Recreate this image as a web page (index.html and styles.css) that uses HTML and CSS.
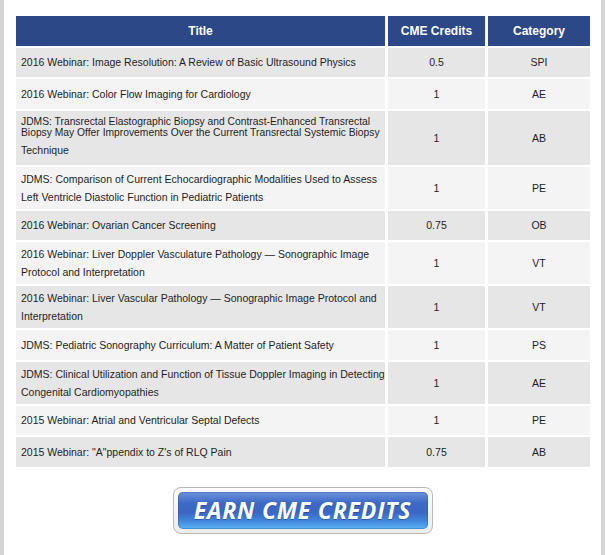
FILE: index.html
```html
<!DOCTYPE html>
<html>
<head>
<meta charset="utf-8">
<link rel="stylesheet" href="styles.css">
</head>
<body>
<div class="page">
  <table class="courses">
    <colgroup>
      <col class="c-title"><col class="c-credits"><col class="c-cat">
    </colgroup>
    <thead>
      <tr class="head"><th>Title</th><th>CME Credits</th><th>Category</th></tr>
    </thead>
    <tbody>
      <tr class="one dark"><td class="t">2016 Webinar: Image Resolution: A Review of Basic Ultrasound Physics</td><td>0.5</td><td>SPI</td></tr>
      <tr class="one light"><td class="t">2016 Webinar: Color Flow Imaging for Cardiology</td><td>1</td><td>AE</td></tr>
      <tr class="three dark"><td class="t"><div class="tight">JDMS: Transrectal Elastographic Biopsy and Contrast-Enhanced Transrectal<br>Biopsy May Offer Improvements Over the Current Transrectal Systemic Biopsy</div><div class="last">Technique</div></td><td>1</td><td>AB</td></tr>
      <tr class="two light"><td class="t">JDMS: Comparison of Current Echocardiographic Modalities Used to Assess<br>Left Ventricle Diastolic Function in Pediatric Patients</td><td>1</td><td>PE</td></tr>
      <tr class="one dark"><td class="t">2016 Webinar: Ovarian Cancer Screening</td><td>0.75</td><td>OB</td></tr>
      <tr class="two light"><td class="t">2016 Webinar: Liver Doppler Vasculature Pathology — Sonographic Image<br>Protocol and Interpretation</td><td>1</td><td>VT</td></tr>
      <tr class="two dark"><td class="t">2016 Webinar: Liver Vascular Pathology — Sonographic Image Protocol and<br>Interpretation</td><td>1</td><td>VT</td></tr>
      <tr class="one light"><td class="t">JDMS: Pediatric Sonography Curriculum: A Matter of Patient Safety</td><td>1</td><td>PS</td></tr>
      <tr class="two dark"><td class="t">JDMS: Clinical Utilization and Function of Tissue Doppler Imaging in Detecting<br>Congenital Cardiomyopathies</td><td>1</td><td>AE</td></tr>
      <tr class="one light"><td class="t">2015 Webinar: Atrial and Ventricular Septal Defects</td><td>1</td><td>PE</td></tr>
      <tr class="one dark"><td class="t">2015 Webinar: "A"ppendix to Z's of RLQ Pain</td><td>0.75</td><td>AB</td></tr>
    </tbody>
  </table>
  <div class="cta">
    <a class="btn" href="#"><span class="btn-face">EARN CME CREDITS</span></a>
  </div>
</div>
</body>
</html>
```
FILE: styles.css
```css
html, body {
  margin: 0;
  padding: 0;
  background: #ffffff;
}

.page {
  width: 605px;
  min-height: 555px;
  box-sizing: border-box;
  border-left: 4px solid #d5d5d5;
  border-right: 4px solid #d5d5d5;
  padding-top: 13.5px;
  font-family: "Liberation Sans", Arial, sans-serif;
}

.courses {
  margin-left: 9px;
  width: 580px;
  border-collapse: separate;
  border-spacing: 3px 2.5px;
  table-layout: fixed;
  font-size: 10.5px;
  color: #1e1e1e;
}

.c-title { width: 369px; }
.c-credits { width: 97px; }
.c-cat { width: 102px; }

.head { height: 30px; }

.head th {
  background: #2d4886;
  color: #ffffff;
  font-size: 12px;
  font-weight: bold;
  text-align: center;
  vertical-align: middle;
  padding: 0;
}

.courses td {
  padding: 0;
  text-align: center;
  vertical-align: middle;
  line-height: 18px;
}

.courses td.t {
  text-align: left;
  padding-left: 5px;
  white-space: nowrap;
}

.one { height: 29.5px; }
.two { height: 42px; }
.three { height: 54px; }

.dark td { background: #e6e6e6; }
.light td { background: #f4f4f4; }

.tight {
  line-height: 11px;
  font-size: 10.3px;
}

.last {
  margin-top: 3px;
  line-height: 18px;
}

.cta {
  display: flex;
  justify-content: center;
  padding-top: 18px;
}

.btn {
  display: block;
  width: 260px;
  height: 47px;
  box-sizing: border-box;
  border: 1px solid #b9b9b9;
  border-radius: 8px;
  background: linear-gradient(#fbfbfb, #ececec);
  padding: 4px;
  text-decoration: none;
}

.btn-face {
  display: flex;
  align-items: center;
  justify-content: center;
  height: 100%;
  border-radius: 5px;
  background: linear-gradient(#6d93dc 0%, #3c69c6 30%, #3a67c4 55%, #4287dc 78%, #5cb5f4 100%);
  box-shadow: inset 0 0 0 1px rgba(40, 80, 160, 0.35);
  color: #ffffff;
  font-family: "Open Sans", "DejaVu Sans", sans-serif;
  font-weight: 700;
  font-style: italic;
  font-size: 23px;
  letter-spacing: 0.8px;
  text-shadow: 0 1px 1px rgba(10, 30, 90, 0.35);
}
```
